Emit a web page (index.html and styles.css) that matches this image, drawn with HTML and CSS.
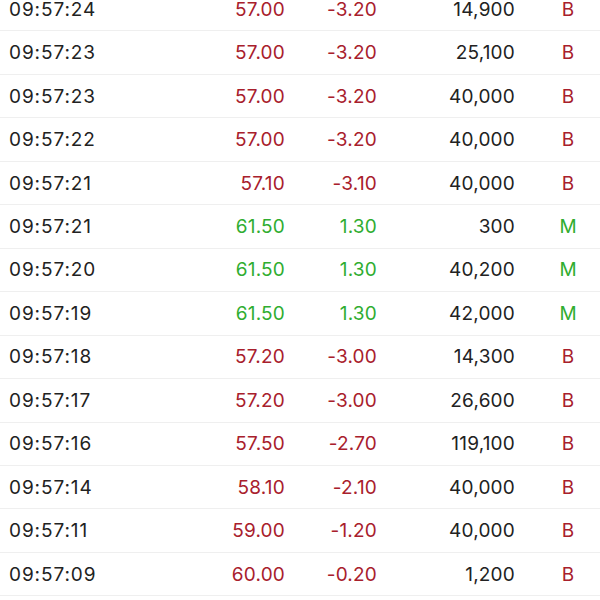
FILE: index.html
```html
<!DOCTYPE html>
<html>
<head>
<meta charset="utf-8">
<link rel="stylesheet" href="styles.css">
</head>
<body>
<div class="list">
  <div class="row"><span class="time">09:57:24</span><span class="num red">57.00</span><span class="num red">-3.20</span><span class="num">14,900</span><span class="side red">B</span></div>
  <div class="row"><span class="time">09:57:23</span><span class="num red">57.00</span><span class="num red">-3.20</span><span class="num">25,100</span><span class="side red">B</span></div>
  <div class="row"><span class="time">09:57:23</span><span class="num red">57.00</span><span class="num red">-3.20</span><span class="num">40,000</span><span class="side red">B</span></div>
  <div class="row"><span class="time">09:57:22</span><span class="num red">57.00</span><span class="num red">-3.20</span><span class="num">40,000</span><span class="side red">B</span></div>
  <div class="row"><span class="time">09:57:21</span><span class="num red">57.10</span><span class="num red">-3.10</span><span class="num">40,000</span><span class="side red">B</span></div>
  <div class="row"><span class="time">09:57:21</span><span class="num green">61.50</span><span class="num green">1.30</span><span class="num">300</span><span class="side green">M</span></div>
  <div class="row"><span class="time">09:57:20</span><span class="num green">61.50</span><span class="num green">1.30</span><span class="num">40,200</span><span class="side green">M</span></div>
  <div class="row"><span class="time">09:57:19</span><span class="num green">61.50</span><span class="num green">1.30</span><span class="num">42,000</span><span class="side green">M</span></div>
  <div class="row"><span class="time">09:57:18</span><span class="num red">57.20</span><span class="num red">-3.00</span><span class="num">14,300</span><span class="side red">B</span></div>
  <div class="row"><span class="time">09:57:17</span><span class="num red">57.20</span><span class="num red">-3.00</span><span class="num">26,600</span><span class="side red">B</span></div>
  <div class="row"><span class="time">09:57:16</span><span class="num red">57.50</span><span class="num red">-2.70</span><span class="num">119,100</span><span class="side red">B</span></div>
  <div class="row"><span class="time">09:57:14</span><span class="num red">58.10</span><span class="num red">-2.10</span><span class="num">40,000</span><span class="side red">B</span></div>
  <div class="row"><span class="time">09:57:11</span><span class="num red">59.00</span><span class="num red">-1.20</span><span class="num">40,000</span><span class="side red">B</span></div>
  <div class="row"><span class="time">09:57:09</span><span class="num red">60.00</span><span class="num red">-0.20</span><span class="num">1,200</span><span class="side red">B</span></div>
</div>
</body>
</html>
```
FILE: styles.css
```css
html, body {
  margin: 0;
  padding: 0;
  background: #fff;
  overflow: hidden;
}
body {
  font-family: Inter, "Liberation Sans", sans-serif;
  font-size: 19px;
  color: #222;
}
.list {
  margin-top: -12px;
}
.row {
  display: grid;
  grid-template-columns: 191px 85px 92px 138px 85px;
  align-items: center;
  height: 42.46px;
  padding-left: 9px;
  border-bottom: 1px solid #efefef;
}
.time {
  text-align: left;
  letter-spacing: 0.9px;
}
.num {
  text-align: right;
  letter-spacing: 0.2px;
}
.side {
  text-align: center;
  padding-left: 21px;
}
.red {
  color: #a8202c;
}
.green {
  color: #30ad30;
}
```
